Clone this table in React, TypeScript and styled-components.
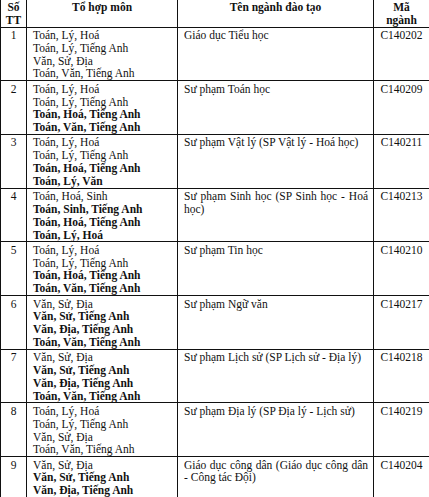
import React from "react";
import styled, { createGlobalStyle } from "styled-components";

type Line = { text: string; bold?: boolean };
type Row = { no: number; combos: Line[]; major: string; code: string };

const r = (text: string): Line => ({ text: text.normalize("NFC") });
const b = (text: string): Line => ({ text: text.normalize("NFC"), bold: true });

const rows: Row[] = [
    { no: 1, combos: [r("Toán, Lý, Hoá"), r("Toán, Lý, Tiếng Anh"), r("Văn, Sử, Địa"), r("Toán, Văn, Tiếng Anh")], major: "Giáo dục Tiểu học", code: "C140202" },
    { no: 2, combos: [r("Toán, Lý, Hoá"), r("Toán, Lý, Tiếng Anh"), b("Toán, Hoá, Tiếng Anh"), b("Toán, Văn, Tiếng Anh")], major: "Sư phạm Toán học", code: "C140209" },
    { no: 3, combos: [r("Toán, Lý, Hoá"), r("Toán, Lý, Tiếng Anh"), b("Toán, Hoá, Tiếng Anh"), b("Toán, Lý, Văn")], major: "Sư phạm Vật lý (SP Vật lý - Hoá học)", code: "C140211" },
    { no: 4, combos: [r("Toán, Hoá, Sinh"), b("Toán, Sinh, Tiếng Anh"), b("Toán, Hoá, Tiếng Anh"), b("Toán, Lý, Hoá")], major: "Sư phạm Sinh học (SP Sinh học - Hoá học)", code: "C140213" },
    { no: 5, combos: [r("Toán, Lý, Hoá"), r("Toán, Lý, Tiếng Anh"), b("Toán, Hoá, Tiếng Anh"), b("Toán, Văn, Tiếng Anh")], major: "Sư phạm Tin học", code: "C140210" },
    { no: 6, combos: [r("Văn, Sử, Địa"), b("Văn, Sử, Tiếng Anh"), b("Văn, Địa, Tiếng Anh"), b("Toán, Văn, Tiếng Anh")], major: "Sư phạm Ngữ văn", code: "C140217" },
    { no: 7, combos: [r("Văn, Sử, Địa"), b("Văn, Sử, Tiếng Anh"), b("Văn, Địa, Tiếng Anh"), b("Toán, Văn, Tiếng Anh")], major: "Sư phạm Lịch sử (SP Lịch sử - Địa lý)", code: "C140218" },
    { no: 8, combos: [r("Toán, Lý, Hoá"), r("Toán, Lý, Tiếng Anh"), r("Văn, Sử, Địa"), r("Toán, Văn, Tiếng Anh")], major: "Sư phạm Địa lý (SP Địa lý - Lịch sử)", code: "C140219" },
    { no: 9, combos: [r("Văn, Sử, Địa"), b("Văn, Sử, Tiếng Anh"), b("Văn, Địa, Tiếng Anh")], major: "Giáo dục công dân (Giáo dục công dân - Công tác Đội)", code: "C140204" },
];

export default function App() {
    return (
        <>
            <GlobalStyle />
            <Table>
                <colgroup>
                    <col style={{ width: 26 }} />
                    <col style={{ width: 151 }} />
                    <col style={{ width: 196 }} />
                    <col style={{ width: 56 }} />
                </colgroup>
                <thead>
                    <tr>
                        <Th>Số<br />TT</Th>
                        <Th>Tổ hợp môn</Th>
                        <Th>Tên ngành đào tạo</Th>
                        <Th>Mã<br />ngành</Th>
                    </tr>
                </thead>
                <tbody>
                    {rows.map((row) => (
                        <tr key={row.no}>
                            <CenterTd>{row.no}</CenterTd>
                            <Td>
                                {row.combos.map((c, i) => (
                                    <ComboLine key={i} $bold={c.bold}>{c.text}</ComboLine>
                                ))}
                            </Td>
                            <Td $justify>{row.major.normalize("NFC")}</Td>
                            <CenterTd>{row.code}</CenterTd>
                        </tr>
                    ))}
                </tbody>
            </Table>
        </>
    );
}

const GlobalStyle = createGlobalStyle`
    html, body {
        margin: 0;
        padding: 0;
        background: #fff;
        height: 497px;
        overflow: hidden;
    }
    body {
        font-family: "Liberation Serif", "Times New Roman", serif;
        color: #111;
    }
`;

const Table = styled.table`
    width: 429px;
    border-collapse: collapse;
    table-layout: fixed;
    font-size: 11.5px;
    line-height: 12.8px;
`;

const Th = styled.th`
    border: 1px solid #111;
    border-top: none;
    padding: 1px 3px 0;
    text-align: center;
    vertical-align: top;
    font-weight: bold;
`;

const Td = styled.td<{ $justify?: boolean }>`
    border: 1px solid #111;
    padding: 1.5px 5px 0 6px;
    vertical-align: top;
    text-align: ${(p) => (p.$justify ? "justify" : "left")};
    text-align-last: left;
`;

const CenterTd = styled.td`
    border: 1px solid #111;
    padding: 1.5px 0 0;
    vertical-align: top;
    text-align: center;
`;

const ComboLine = styled.div<{ $bold?: boolean }>`
    font-weight: ${(p) => (p.$bold ? "bold" : "normal")};
    white-space: nowrap;
`;
